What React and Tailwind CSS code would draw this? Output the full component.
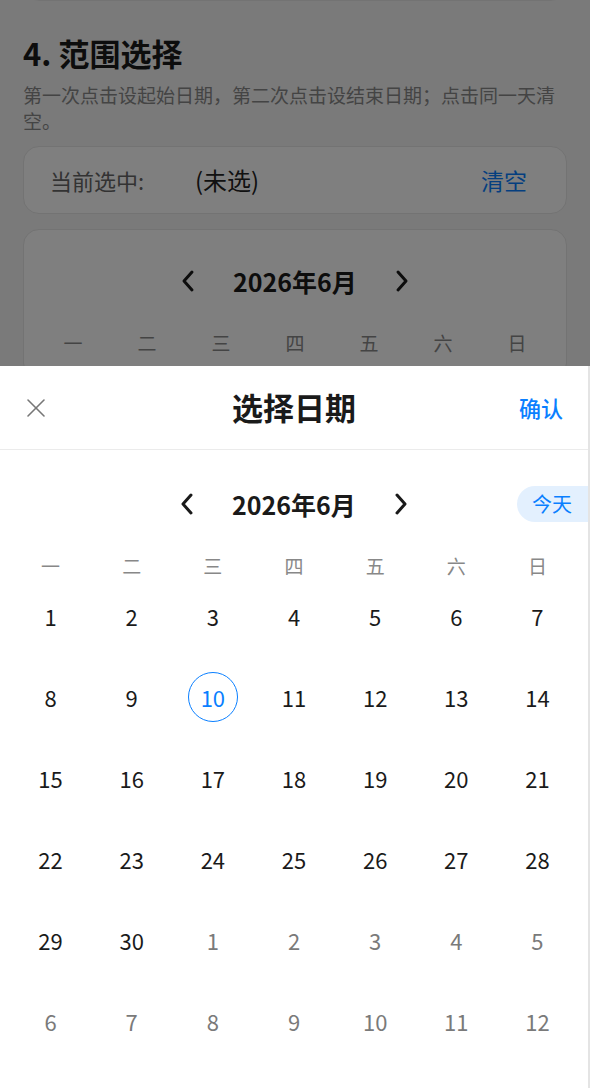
import { useState } from 'react';

const WEEK = ['一', '二', '三', '四', '五', '六', '日'];

function buildDays() {
  const days = [];
  for (let d = 1; d <= 30; d++) days.push({ n: d, cur: true });
  for (let d = 1; d <= 12; d++) days.push({ n: d, cur: false });
  return days;
}

function Chevron({ dir = 'left' }) {
  return (
    <svg width="16" height="24" viewBox="0 0 16 24" fill="none" stroke="currentColor" strokeWidth="3" strokeLinecap="round" strokeLinejoin="round">
      {dir === 'left' ? <polyline points="12,3 4,12 12,21" /> : <polyline points="4,3 12,12 4,21" />}
    </svg>
  );
}

function MonthNav() {
  return (
    <div className="flex items-center justify-center gap-[33px] h-[40px] text-[#1a1a1a]">
      <button className="flex items-center justify-center w-[24px] h-[40px]">
        <Chevron dir="left" />
      </button>
      <span className="text-[25px] font-bold leading-none">2026年6月</span>
      <button className="flex items-center justify-center w-[24px] h-[40px]">
        <Chevron dir="right" />
      </button>
    </div>
  );
}

export default function App() {
  const [selected] = useState(10);
  const days = buildDays();

  return (
    <div className="relative w-[590px] h-[1088px] overflow-hidden bg-[#f4f4f4]" style={{ fontFamily: '"Noto Sans CJK SC", "Noto Sans", sans-serif' }}>
      {/* page behind the sheet */}
      <div className="px-[23px]">
        <div className="h-[40px] -mt-[39px] bg-white rounded-2xl border border-[#e6e6e6]"></div>

        <h2 className="mt-[33px] text-[31px] font-bold leading-[38px] text-[#1a1a1a]">4. 范围选择</h2>
        <p className="mt-[10px] text-[19px] leading-[26px] text-[#888]">
          第一次点击设起始日期，第二次点击设结束日期；点击同一天清空。
        </p>

        <div className="mt-[12px] h-[68px] bg-white rounded-2xl border border-[#e6e6e6] flex items-center pl-[26px] pr-[39px]">
          <span className="text-[22px] text-[#666] w-[145px]">当前选中:</span>
          <span className="text-[24px] text-[#222]">(未选)</span>
          <span className="ml-auto text-[23px] text-[#0a7fff]">清空</span>
        </div>

        <div className="mt-[15px] bg-white rounded-2xl border border-[#e6e6e6] px-[12px] pt-[31px] pb-[20px]">
          <MonthNav />
          <div className="mt-[28px] grid grid-cols-7 text-center text-[19px] text-[#888]">
            {WEEK.map(w => <span key={w}>{w}</span>)}
          </div>
        </div>
      </div>

      {/* overlay */}
      <div className="absolute inset-0 bg-black/50"></div>

      {/* bottom sheet */}
      <div className="absolute left-0 right-0 top-[366px] bottom-0 bg-white border-r-2 border-[#e4e4e4] overflow-hidden">
        <div className="relative h-[84px] flex items-center justify-center border-b border-[#ebebeb]">
          <button className="absolute left-[26px] top-[32px] text-[#777]">
            <svg width="20" height="20" viewBox="0 0 20 20" stroke="currentColor" strokeWidth="1.6" strokeLinecap="round">
              <line x1="2" y1="2" x2="18" y2="18" />
              <line x1="18" y1="2" x2="2" y2="18" />
            </svg>
          </button>
          <h3 className="text-[31px] font-bold text-[#1a1a1a]">选择日期</h3>
          <button className="absolute right-[25px] text-[22px] font-medium text-[#0a7fff]">确认</button>
        </div>

        <div className="relative mt-[34px]">
          <MonthNav />
          <button className="absolute left-[517px] top-[2px] h-[36px] w-[100px] rounded-full bg-[#e3f0fe] text-[20px] text-[#0a7fff] text-left pl-[15px]">
            今天
          </button>
        </div>

        <div className="mt-[26px] px-[10px] grid grid-cols-7 text-center text-[19px] text-[#888] h-[32px] items-center">
          {WEEK.map(w => <span key={w}>{w}</span>)}
        </div>

        <div className="-mt-[2px] px-[10px] grid grid-cols-7 gap-y-[9px]">
          {days.map((d, i) => (
            <div key={i} className="h-[72px] flex items-center justify-center">
              {d.cur && d.n === selected ? (
                <span className="w-[50px] h-[50px] rounded-full border-[1.5px] border-[#0a7fff] flex items-center justify-center text-[22px] text-[#0a7fff]">
                  {d.n}
                </span>
              ) : (
                <span className={`text-[22px] ${d.cur ? 'text-[#1a1a1a]' : 'text-[#7a7a7a]'}`}>{d.n}</span>
              )}
            </div>
          ))}
        </div>
      </div>
    </div>
  );
}
